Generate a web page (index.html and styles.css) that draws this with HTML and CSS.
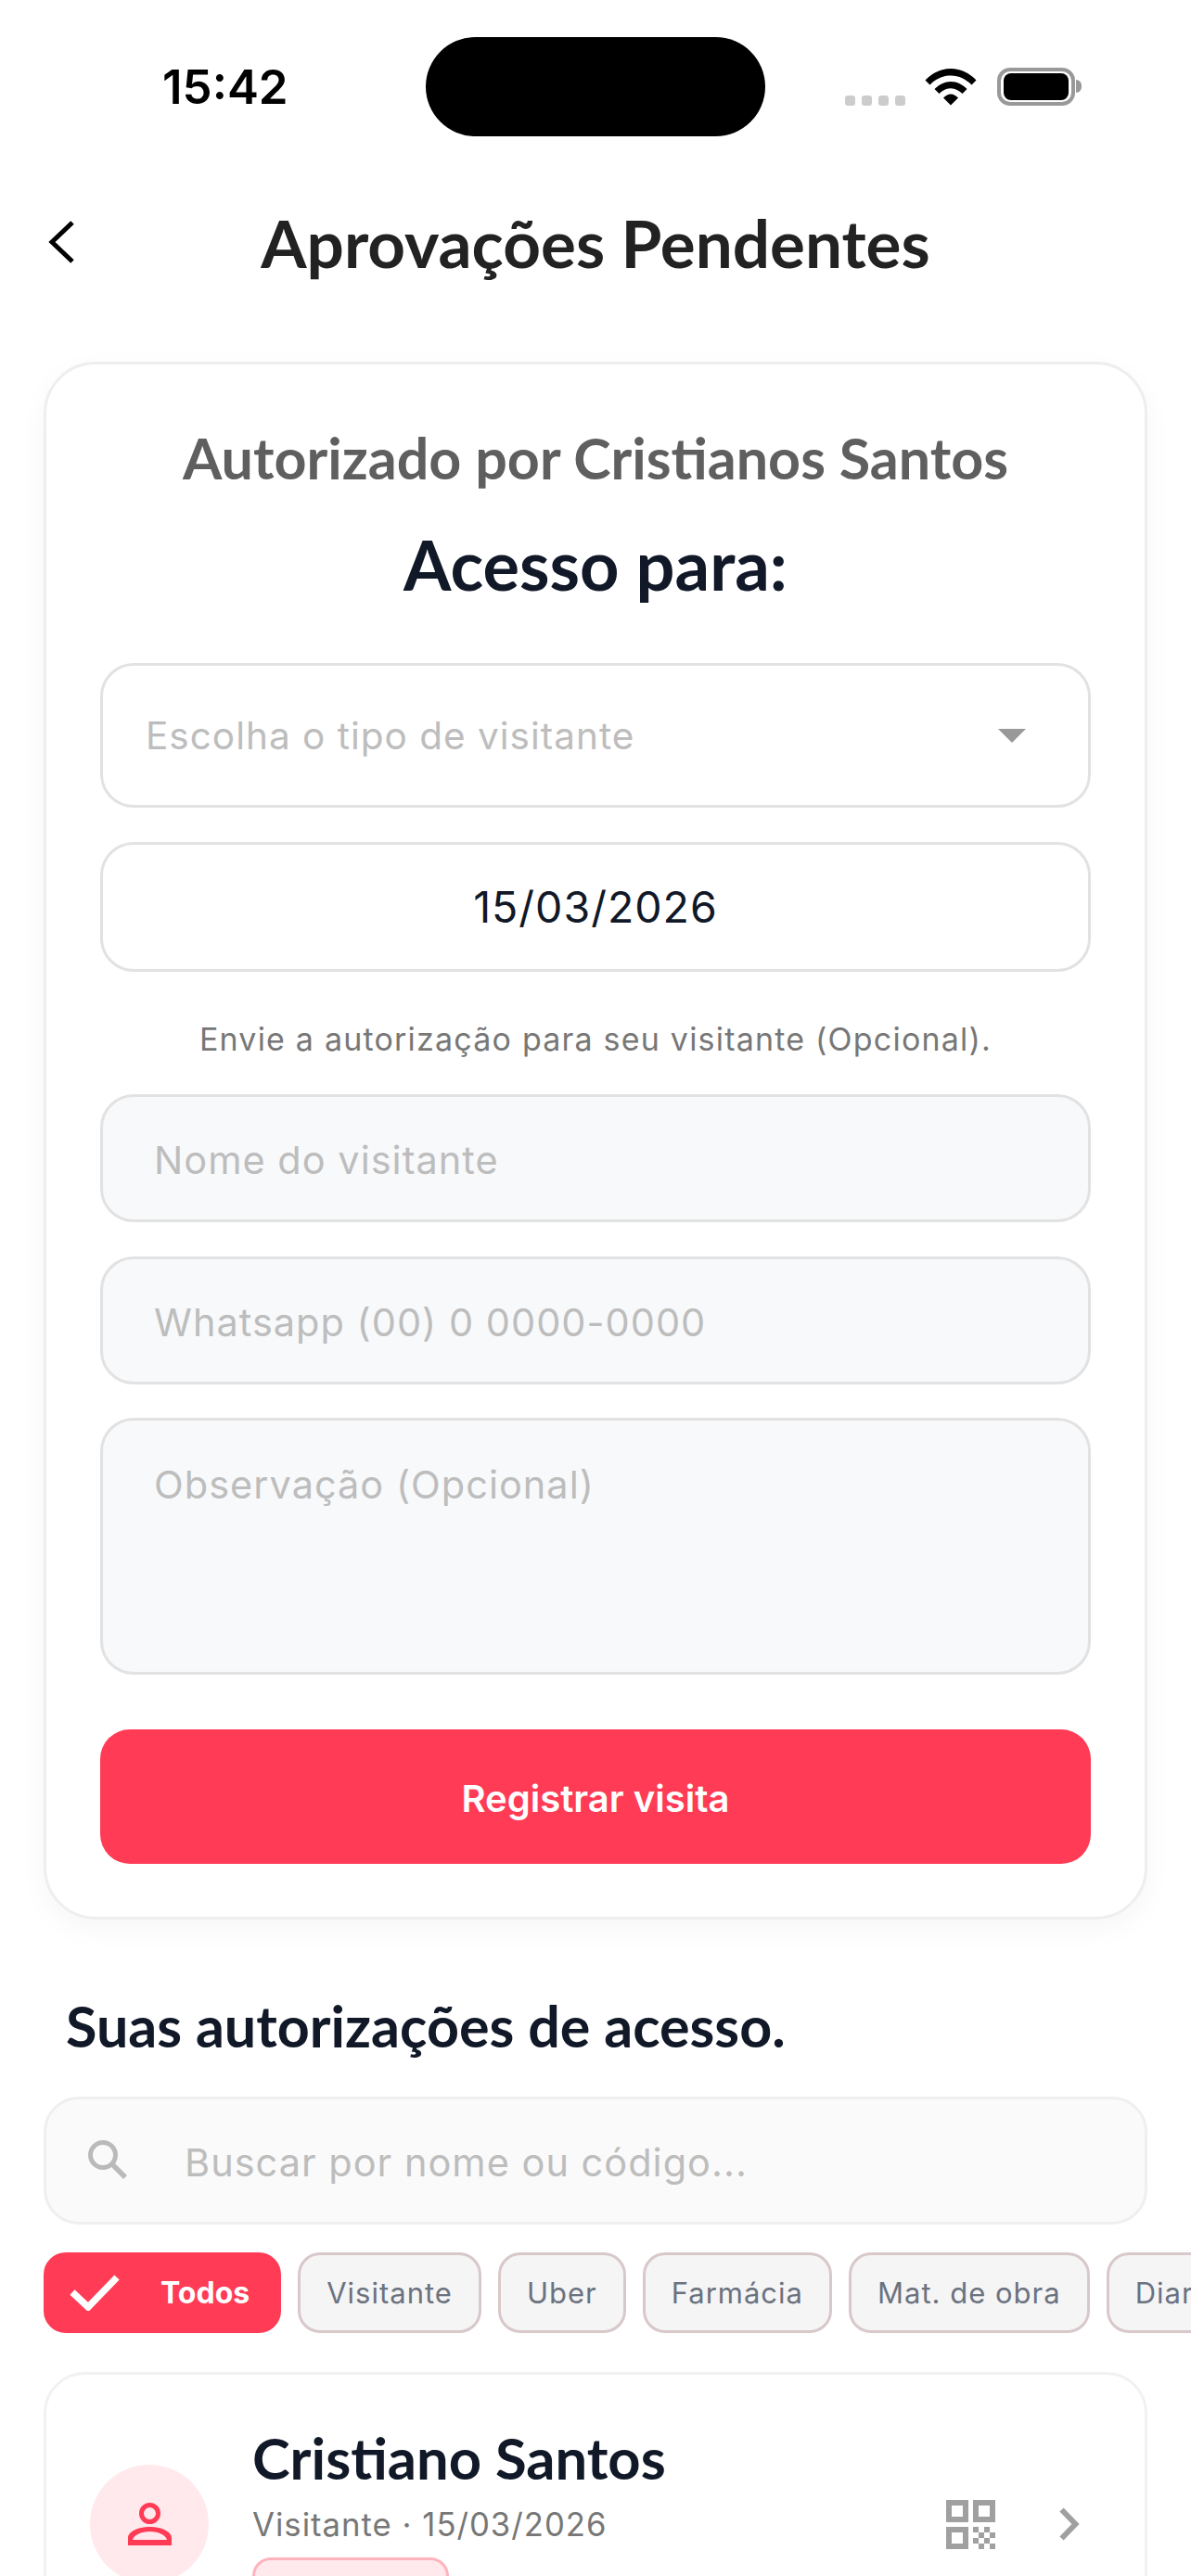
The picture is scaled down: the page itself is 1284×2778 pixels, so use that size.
FILE: index.html
```html
<!DOCTYPE html>
<html lang="pt-BR">
<head>
  <meta charset="UTF-8">
  <meta name="viewport" content="width=device-width, initial-scale=1.0">
  <title>Aprovações Pendentes</title>
  <link rel="stylesheet" href="styles.css">
</head>
<body>
  <div class="status-bar">
    <span class="status-time">15:42</span>
    <div class="island"></div>
    <div class="status-icons">
      <div class="signal-dots"><i></i><i></i><i></i><i></i></div>
      <svg class="wifi-icon" width="56" height="42" viewBox="0 0 56 42">
        <path d="M0.5 14.500C7.500 7 17 2 28 2s20.500 5 27.500 12.500l-5 5C44.500 13.500 37 9.500 28 9.500S11.500 13.500 5.500 19.500z" fill="#000"/>
        <path d="M10.500 24C15 19.500 21 16 28 16s13 3.500 17.500 8l-5 5C37 25.800 33 23.300 28 23.300S19 25.800 15.500 29z" fill="#000"/>
        <path d="M20 33.500C22.200 31.500 25 29.500 28 29.500s5.800 2 8 4L28 41.500z" fill="#000"/>
      </svg>
      <div class="battery"><div class="battery-fill"></div></div>
      <div class="battery-cap"></div>
    </div>
  </div>

  <div class="top-bar">
    <svg class="back-icon" width="32" height="48" viewBox="0 0 32 48">
      <path d="M27 3L5 24l22 21" fill="none" stroke="#000" stroke-width="5"/>
    </svg>
    <h1 class="page-title">Aprovações Pendentes</h1>
  </div>

  <div class="form-card">
    <div class="authorized-by">Autorizado por Cristianos Santos</div>
    <h2 class="access-title">Acesso para:</h2>
    <div class="field field-select">
      <span class="placeholder">Escolha o tipo de visitante</span>
      <span class="caret"></span>
    </div>
    <div class="field field-date">15/03/2026</div>
    <p class="hint">Envie a autorização para seu visitante (Opcional).</p>
    <div class="field field-soft"><span class="placeholder">Nome do visitante</span></div>
    <div class="field field-soft"><span class="placeholder">Whatsapp (00) 0 0000-0000</span></div>
    <div class="field field-soft field-area"><span class="placeholder">Observação (Opcional)</span></div>
    <div class="submit-btn">Registrar visita</div>
  </div>

  <h2 class="section-title">Suas autorizações de acesso.</h2>

  <div class="search-box">
    <svg class="search-icon" width="42" height="42" viewBox="0 0 42 42">
      <circle cx="16" cy="16" r="13.500" fill="none" stroke="#bababa" stroke-width="5"/>
      <path d="M25 25l15 15" stroke="#bababa" stroke-width="5.500"/>
    </svg>
    <span class="placeholder">Buscar por nome ou código...</span>
  </div>

  <div class="chips">
    <div class="chip chip-active">
      <svg class="check-icon" width="54" height="39" viewBox="0 0 54 39">
        <path d="M3 19l17 16L51 3" fill="none" stroke="#fff" stroke-width="7.500"/>
      </svg>
      Todos
    </div>
    <div class="chip">Visitante</div>
    <div class="chip">Uber</div>
    <div class="chip">Farmácia</div>
    <div class="chip">Mat. de obra</div>
    <div class="chip">Diarista</div>
  </div>

  <div class="visit-card">
    <div class="avatar">
      <svg width="47" height="46" viewBox="0 0 47 46">
        <circle cx="23.500" cy="11.500" r="9" fill="none" stroke="#ff3b55" stroke-width="5"/>
        <path d="M0 46V38C0 31 11 26 23.500 26S47 31 47 38V46ZM5 40H42C41 35 33 31 23.500 31S6 35 5 40Z" fill="#ff3b55" fill-rule="evenodd"/>
      </svg>
    </div>
    <div class="visit-info">
      <div class="visit-name">Cristiano Santos</div>
      <div class="visit-meta">Visitante · 15/03/2026</div>
      <div class="visit-badge"></div>
    </div>
    <svg class="qr-icon" width="53" height="53" viewBox="0 0 53 53">
      <path d="M0 0h24v24H0zM6 6v12h12V6zM29 0h24v24H29zM35 6v12h12V6zM0 29h24v24H0zM6 35v12h12V35z" fill="#a0a0a0" fill-rule="evenodd"/>
      <path d="M29 29h6v6h-6zM41 29h6v6h-6zM35 35h6v6h-6zM47 35h6v6h-6zM29 41h6v6h-6zM41 41h6v6h-6zM35 47h6v6h-6zM47 47h6v6h-6z" fill="#a0a0a0"/>
    </svg>
    <svg class="row-chevron" width="22" height="36" viewBox="0 0 22 36">
      <path d="M2.500 2.500L17.500 18L2.500 33.500" fill="none" stroke="#a0a0a0" stroke-width="6"/>
    </svg>
  </div>
</body>
</html>
```

FILE: styles.css
```css
html, body {
  margin: 0;
  height: 2778px;
  overflow: hidden;
}

body {
  width: 1284px;
  background: #fff;
  font-family: 'Inter', sans-serif;
  color: #111827;
}

/* status bar */
.status-bar {
  height: 187px;
  display: flex;
  align-items: flex-start;
  box-sizing: border-box;
  padding-top: 40px;
}

.status-time {
  width: 459px;
  box-sizing: border-box;
  padding: 26px 0 0 175px;
  font-weight: 600;
  font-size: 51px;
  line-height: 56px;
  color: #000;
}

.island {
  width: 366px;
  height: 107px;
  background: #000;
  border-radius: 54px;
}

.status-icons {
  display: flex;
  align-items: flex-start;
  margin-left: 86px;
  padding-top: 32px;
}

.signal-dots {
  display: flex;
  gap: 7px;
  margin-top: 31px;
}

.signal-dots i {
  width: 11px;
  height: 11px;
  border-radius: 3px;
  background: #ccc;
}

.wifi-icon {
  margin-left: 21px;
}

.battery {
  width: 84px;
  height: 41px;
  margin: 1px 0 0 22px;
  box-sizing: border-box;
  border: 4px solid #999;
  border-radius: 14px;
  padding: 2px 3px;
}

.battery-fill {
  height: 100%;
  background: #000;
  border-radius: 8px;
}

.battery-cap {
  width: 6px;
  height: 14px;
  margin: 14px 0 0 1px;
  background: #999;
  border-radius: 0 6px 6px 0;
}

/* header */
.top-bar {
  height: 149px;
  position: relative;
  display: flex;
  align-items: center;
  justify-content: center;
  padding-bottom: 54px;
}

.back-icon {
  position: absolute;
  left: 51px;
  top: 50px;
}

.page-title {
  margin: 0;
  font-family: 'Lato', sans-serif;
  font-weight: 700;
  font-size: 71px;
  line-height: 80px;
  color: #222;
}

/* form card */
.form-card {
  margin: 0 47px;
  box-sizing: border-box;
  height: 1680px;
  padding: 0 58px;
  border: 3px solid #eee;
  border-radius: 56px;
  box-shadow: 0 10px 30px rgba(0, 0, 0, 0.04);
}

.authorized-by {
  padding-top: 68px;
  text-align: center;
  font-family: 'Lato', sans-serif;
  font-weight: 700;
  font-size: 61px;
  line-height: 66px;
  color: #5f5f5f;
}

.access-title {
  margin: 46px 0 0;
  text-align: center;
  font-family: 'Lato', sans-serif;
  font-weight: 700;
  font-size: 74px;
  line-height: 72px;
  color: #111827;
}

.field {
  box-sizing: border-box;
  border: 3px solid #e2e2e2;
  border-radius: 36px;
  font-size: 41.500px;
  display: flex;
  align-items: center;
}

.placeholder {
  color: #bdbdbd;
  letter-spacing: 1px;
}

.field-select {
  height: 156px;
  margin-top: 70px;
  padding: 0 67px 0 46px;
  justify-content: space-between;
  font-size: 40.500px;
}

.caret {
  width: 0;
  height: 0;
  border-left: 15px solid transparent;
  border-right: 15px solid transparent;
  border-top: 15px solid #999;
}

.field-date {
  height: 140px;
  margin-top: 37px;
  justify-content: center;
  font-size: 46.500px;
  letter-spacing: 1px;
}

.hint {
  margin: 53px 0 0;
  text-align: center;
  font-size: 34px;
  line-height: 40px;
  letter-spacing: 1.200px;
  color: #777;
}

.field-soft {
  height: 138px;
  margin-top: 37px;
  padding: 4px 55px 0;
  background: #f8f9fb;
}

.hint + .field-soft {
  margin-top: 39px;
}

.field-area {
  height: 277px;
  margin-top: 36px;
  align-items: flex-start;
  padding-top: 44px;
}

.submit-btn {
  height: 145px;
  margin-top: 59px;
  padding-top: 3px;
  box-sizing: border-box;
  display: flex;
  align-items: center;
  justify-content: center;
  background: #ff3b55;
  border-radius: 32px;
  font-weight: 600;
  font-size: 40px;
  color: #fff;
}

/* list */
.section-title {
  margin: 82px 0 0 71px;
  font-family: 'Lato', sans-serif;
  font-weight: 700;
  font-size: 61px;
  line-height: 66px;
  color: #111827;
}

.search-box {
  margin: 43px 47px 0;
  height: 138px;
  box-sizing: border-box;
  display: flex;
  align-items: center;
  padding: 4px 0 0 45px;
  gap: 62px;
  background: #fafafa;
  border: 3px solid #efefef;
  border-radius: 38px;
  font-size: 41.500px;
}

.search-icon {
  margin-top: -6px;
}

.chips {
  display: flex;
  gap: 18px;
  margin: 30px 0 0 47px;
  overflow: hidden;
}

.chip {
  box-sizing: border-box;
  flex-shrink: 0;
  height: 87px;
  padding: 0 28px;
  display: flex;
  align-items: center;
  background: #f5f5f5;
  border: 3px solid #d9c8ca;
  border-radius: 24px;
  font-size: 31px;
  letter-spacing: 1px;
  color: #6b7280;
}

.chip-active {
  padding: 0 31px 0 25px;
  gap: 44px;
  background: #ff3b55;
  border-color: #ff3b55;
  color: #fff;
  font-weight: 700;
  font-size: 32px;
  letter-spacing: 0;
}

.visit-card {
  margin: 42px 47px 0;
  height: 400px;
  box-sizing: border-box;
  display: flex;
  align-items: flex-start;
  padding: 0 70px 0 47px;
  border: 3px solid #f1f1f1;
  border-radius: 44px;
}

.avatar {
  width: 128px;
  height: 128px;
  flex-shrink: 0;
  border-radius: 50%;
  background: #ffe9ec;
  display: flex;
  align-items: center;
  justify-content: center;
  margin-top: 97px;
}

.visit-info {
  flex: 1;
  margin: 55px 0 0 47px;
}

.visit-name {
  font-family: 'Lato', sans-serif;
  font-weight: 700;
  font-size: 61.500px;
  line-height: 68px;
  color: #111827;
}

.visit-meta {
  margin-top: 17px;
  font-size: 34.700px;
  line-height: 42px;
  letter-spacing: 1px;
  color: #777;
}

.visit-badge {
  margin-top: 15px;
  width: 212px;
  height: 60px;
  box-sizing: border-box;
  background: #ffe9ec;
  border: 3px solid #ffb3be;
  border-radius: 20px;
}

.qr-icon {
  margin-top: 135px;
}

.row-chevron {
  margin: 143px 0 0 69px;
}
```
